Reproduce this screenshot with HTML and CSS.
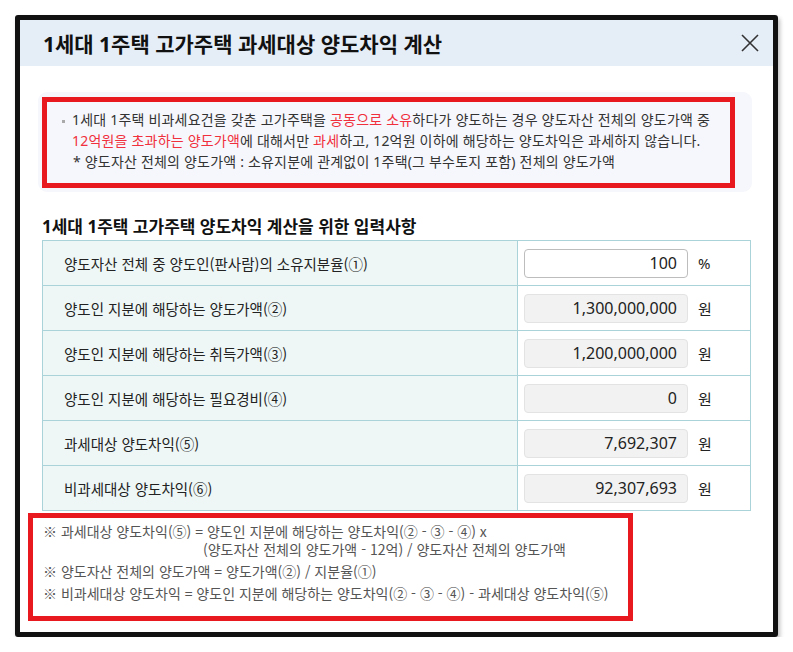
FILE: index.html
```html
<!DOCTYPE html>
<html lang="ko">
<head>
  <meta charset="UTF-8">
  <title>1세대 1주택 고가주택 과세대상 양도차익 계산</title>
  <link rel="stylesheet" href="styles.css">
</head>
<body>

  <div class="modal">
    <div class="modal-head">
      <h2>1세대 1주택 고가주택 과세대상 양도차익 계산</h2>
      <button class="close" type="button" aria-label="닫기">
        <svg width="18" height="18" viewBox="0 0 18 18">
          <path d="M1 1 L17 17 M17 1 L1 17" stroke="#333" stroke-width="1.6" fill="none"/>
        </svg>
      </button>
    </div>

    <div class="modal-body">
      <div class="info">
        <div class="mark">
          <p class="bullet"><span class="dot"></span>1세대 1주택 비과세요건을 갖춘 고가주택을 <em>공동으로 소유</em>하다가 양도하는 경우 양도자산 전체의 양도가액 중<br><em>12억원을 초과하는 양도가액</em>에 대해서만 <em>과세</em>하고, 12억원 이하에 해당하는 양도차익은 과세하지 않습니다.</p>
          <p class="sub">* 양도자산 전체의 양도가액 : 소유지분에 관계없이 1주택(그 부수토지 포함) 전체의 양도가액</p>
        </div>
      </div>

      <h3>1세대 1주택 고가주택 양도차익 계산을 위한 입력사항</h3>

      <table class="calc">
        <tr>
          <th>양도자산 전체 중 양도인(판사람)의 소유지분율(①)</th>
          <td><input class="num" type="text" value="100"><span class="unit">%</span></td>
        </tr>
        <tr>
          <th>양도인 지분에 해당하는 양도가액(②)</th>
          <td><input class="num" type="text" value="1,300,000,000" readonly><span class="unit">원</span></td>
        </tr>
        <tr>
          <th>양도인 지분에 해당하는 취득가액(③)</th>
          <td><input class="num" type="text" value="1,200,000,000" readonly><span class="unit">원</span></td>
        </tr>
        <tr>
          <th>양도인 지분에 해당하는 필요경비(④)</th>
          <td><input class="num" type="text" value="0" readonly><span class="unit">원</span></td>
        </tr>
        <tr>
          <th>과세대상 양도차익(⑤)</th>
          <td><input class="num" type="text" value="7,692,307" readonly><span class="unit">원</span></td>
        </tr>
        <tr>
          <th>비과세대상 양도차익(⑥)</th>
          <td><input class="num" type="text" value="92,307,693" readonly><span class="unit">원</span></td>
        </tr>
      </table>

      <div class="notes">
        <p>※ 과세대상 양도차익(⑤) = 양도인 지분에 해당하는 양도차익(② - ③ - ④) x<span class="cont">(양도자산 전체의 양도가액 - 12억) / 양도자산 전체의 양도가액</span></p>
        <p>※ 양도자산 전체의 양도가액 = 양도가액(②) / 지분율(①)</p>
        <p>※ 비과세대상 양도차익 = 양도인 지분에 해당하는 양도차익(② - ③ - ④) - 과세대상 양도차익(⑤)</p>
      </div>
    </div>
  </div>

</body>
</html>
```

FILE: styles.css
```css
* {
  box-sizing: border-box;
}

body {
  margin: 0;
  background: #ffffff;
  font-family: "Noto Sans", "Noto Sans CJK KR", sans-serif;
  color: #222;
}

.modal {
  width: 763px;
  height: 622px;
  margin: 15px 0 0 15px;
  border: 5px solid #111;
  border-radius: 3px;
  background: #fff;
  box-shadow: 2px 3px 4px rgba(0,0,0,0.25);
  overflow: hidden;
}

.modal-head {
  height: 46px;
  background: #e5edf7;
  display: flex;
  align-items: center;
  justify-content: space-between;
  padding: 0 14px 0 23px;
}

.modal-head h2 {
  margin: 0;
  font-size: 21px;
  font-weight: 700;
  color: #111;
}

.close {
  background: none;
  border: none;
  padding: 0;
  width: 18px;
  height: 18px;
  cursor: pointer;
  display: flex;
}

.modal-body {
  padding: 26px 21px 0 22px;
}

/* 안내 박스 */
.info {
  background: #f6f7fc;
  border-radius: 9px;
  margin-left: -4px;
  padding: 5px 17px 4px 4px;
}

.mark {
  border: 5px solid #e8191f;
  padding: 7px 10px 11px 15px;
  font-size: 14px;
  line-height: 21px;
  letter-spacing: 0.2px;
  color: #333;
}

.mark p {
  margin: 0;
  white-space: nowrap;
}

.mark em {
  font-style: normal;
  color: #f0303c;
}

.bullet {
  padding-left: 10px;
  text-indent: -10px;
}

.dot {
  display: inline-block;
  width: 3px;
  height: 3px;
  background: #aaa;
  margin-right: 7px;
  vertical-align: middle;
}

.sub {
  padding-left: 11px;
}

h3 {
  margin: 21px 0 0;
  font-size: 17px;
  font-weight: 700;
  line-height: 27px;
  color: #111;
}

/* 입력 표 */
.calc {
  width: 709px;
  border-collapse: collapse;
}

.calc th,
.calc td {
  border: 1px solid #a9d3d9;
  height: 45px;
  padding: 0;
}

.calc th {
  width: 475px;
  background: #eef7f6;
  text-align: left;
  font-family: "Noto Sans CJK KR", sans-serif;
  font-weight: 400;
  font-size: 14.5px;
  padding-left: 21px;
  color: #222;
}

.calc td {
  padding-left: 6px;
}

.num {
  width: 164px;
  height: 29px;
  border: 1px solid #e3e3e3;
  border-radius: 4px;
  background: #f2f2f2;
  font-family: "Noto Sans", sans-serif;
  font-size: 16px;
  color: #222;
  text-align: right;
  padding: 0 10px;
  vertical-align: middle;
}

.num:not([readonly]) {
  background: #fff;
  border-color: #bdbdbd;
}

.unit {
  margin-left: 10px;
  font-size: 15px;
  vertical-align: middle;
}

/* 계산식 */
.notes {
  width: 605px;
  margin: 2px 0 0 -14px;
  border: 5px solid #e8191f;
  padding: 4px 10px 10px 10px;
  font-family: "Noto Sans CJK KR", sans-serif;
  font-size: 14px;
  line-height: 18px;
  color: #555;
}

.notes p {
  margin: 0 0 4px;
  white-space: nowrap;
}

.notes .cont {
  display: block;
  padding-left: 160px;
}
```
